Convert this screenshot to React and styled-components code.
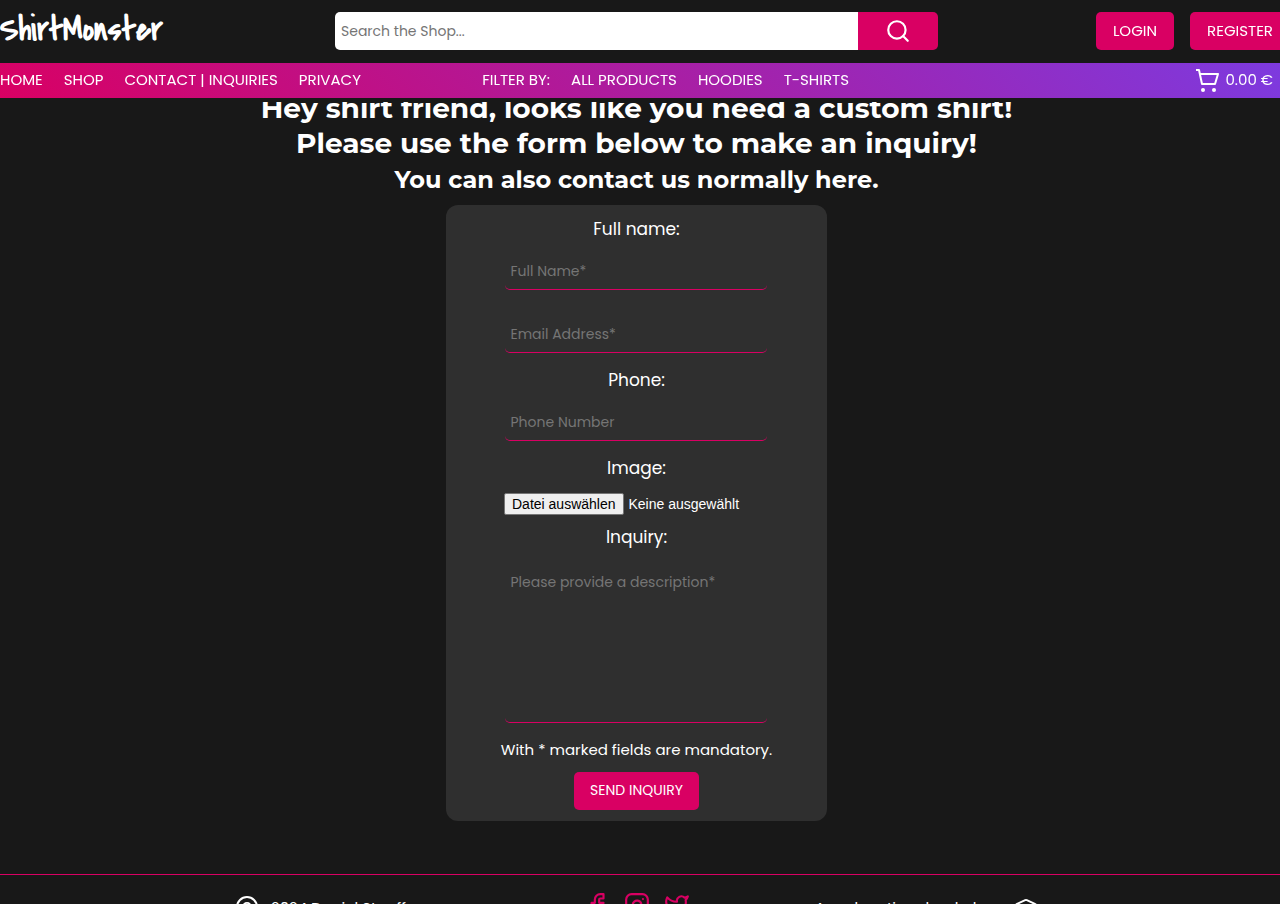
import React from "react";
import styled, { createGlobalStyle } from "styled-components";
import { Search, ShoppingCart, Facebook, Instagram, Twitter, Copyright, GraduationCap } from "lucide-react";

const pink = "#d90063";
const ink = "#181818";

const GlobalStyle = createGlobalStyle`
  *, *::before, *::after { box-sizing: border-box; }
  body {
    margin: 0;
    background: ${ink};
    color: #fff;
    font-family: Poppins, Inter, sans-serif;
    font-size: 15px;
    overflow-x: hidden;
  }
  a { color: inherit; text-decoration: none; }
`;

const Header = styled.header`
  position: fixed;
  top: 0;
  left: 0;
  right: 0;
  z-index: 2;
  background: ${ink};
  padding-bottom: 4px;
`;

const TopBar = styled.div`
  display: grid;
  grid-template-columns: 1fr minmax(300px, 603px) 1fr;
  align-items: center;
  height: 63px;
  padding: 0 7px 1px 0;
`;

const LogoLink = styled.a`
  display: block;
  height: 56px;
  align-self: start;
`;

const LogoText = styled.text`
  font: 700 34px "Just Another Hand", "Covered By Your Grace", "Reenie Beanie", Caveat, "Liberation Sans", cursive;
  fill: #fff;
`;

const SearchForm = styled.form`
  display: flex;
  height: 38px;
  border-radius: 5px;
  overflow: hidden;
`;

const SearchInput = styled.input`
  flex: 1;
  min-width: 0;
  border: 0;
  padding: 0 6px;
  background: #fff;
  font: inherit;
  font-size: 14px;
  &::placeholder { color: #757575; }
`;

const SearchButton = styled.button`
  display: flex;
  align-items: center;
  justify-content: center;
  width: 80px;
  border: 0;
  background: ${pink};
  color: #fff;
`;

const Account = styled.div`
  display: flex;
  justify-content: flex-end;
  gap: 16px;
  margin-right: -17px;
`;

const Button = styled.button`
  height: 38px;
  padding: 0 16px 2px;
  border: 0;
  border-radius: 5px;
  background: ${pink};
  color: #fff;
  font: inherit;
  font-size: 14px;
  white-space: nowrap;
`;

const AccountButton = styled(Button)`
  padding: 0 17px 1px;
  font-size: 15px;
`;

const NavBar = styled.nav`
  display: grid;
  grid-template-columns: 25fr 25fr 16fr;
  align-items: center;
  height: 35px;
  padding: 0 7px 2px 0;
  background: linear-gradient(45deg, ${pink}, #7d3adf);
  white-space: nowrap;
`;

const NavGroup = styled.div`
  display: flex;
  gap: 21px;
`;

const Cart = styled.a`
  display: flex;
  align-items: center;
  justify-content: flex-end;
  gap: 6px;
`;

const Main = styled.main`
  display: flex;
  flex-direction: column;
  align-items: center;
  padding: 91px 7px 53px 0;
`;

const Title = styled.h1`
  margin: 0;
  font: 700 28px/35px Montserrat, Inter, sans-serif;
  text-align: center;
`;

const Subtitle = styled.h2`
  margin: 4px 0 10px;
  font: 700 24px/30px Montserrat, Inter, sans-serif;
  text-align: center;
`;

const InquiryForm = styled.form`
  display: flex;
  flex-direction: column;
  align-items: center;
  width: 30%;
  min-width: 340px;
  padding: 12px 0 11px;
  border-radius: 12px;
  background: #2f2f2f;
`;

const Label = styled.label`
  font-size: 17px;
  line-height: 25px;
`;

const Field = styled.input`
  width: 262px;
  height: 37px;
  margin: 11px 0 15px;
  padding: 0 5px;
  border: 0;
  border-bottom: 1px solid ${pink};
  border-radius: 5px;
  background: transparent;
  color: #fff;
  font: inherit;
  font-size: 14px;
  &::placeholder { color: #757575; }
`;

const Message = styled(Field)`
  display: block;
  height: 161px;
  margin: 12px 0 14px;
  padding: 10px 5px;
  resize: none;
  line-height: 21px;
`;

const FileRow = styled.div`
  display: flex;
  align-items: center;
  gap: 5px;
  width: 265px;
  margin: 12px 0 10px;
  font: 14px/16px "Liberation Sans", sans-serif;
`;

const FileButton = styled.button`
  height: 22px;
  padding: 1px 7px;
  border: 1px solid #767676;
  border-radius: 2px;
  background: #efefef;
  color: #000;
  font: inherit;
  white-space: nowrap;
`;

const Note = styled.p`
  margin: 0 0 9px;
  line-height: 26px;
`;

const Footer = styled.footer`
  padding: 17px 7px 20px 0;
  border-top: 1px solid ${pink};
`;

const FooterRow = styled.div`
  display: grid;
  grid-template-columns: 1fr auto 1fr;
  align-items: center;
  max-width: 803px;
  margin: 0 auto;
`;

const FooterCell = styled.div`
  display: flex;
  align-items: center;
  justify-content: ${(p) => p.$align || "flex-start"};
  gap: 12px;
`;

const Social = styled.div`
  display: flex;
  gap: 14px;
  padding-bottom: 4px;
  color: ${pink};
  a { display: flex; }
`;

function Logo() {
  return (
    <svg width="180" height="56" viewBox="0 0 180 56" role="img" aria-label="ShirtMonster">
      <LogoText x="0" y="40">ShirtMonster</LogoText>
    </svg>
  );
}

export default function App() {
  const stop = (e) => e.preventDefault();
  return (
    <>
      <GlobalStyle />
      <Header>
        <TopBar>
          <LogoLink href="#home"><Logo /></LogoLink>
          <SearchForm role="search" onSubmit={stop}>
            <SearchInput type="search" aria-label="Search the Shop" placeholder="Search the Shop..." />
            <SearchButton aria-label="Search"><Search size={26} strokeWidth={2} /></SearchButton>
          </SearchForm>
          <Account>
            <AccountButton type="button">LOGIN</AccountButton>
            <AccountButton type="button">REGISTER</AccountButton>
          </Account>
        </TopBar>
        <NavBar>
          <NavGroup>
            <a href="#home">HOME</a>
            <a href="#shop">SHOP</a>
            <a href="#contact">CONTACT | INQUIRIES</a>
            <a href="#privacy">PRIVACY</a>
          </NavGroup>
          <NavGroup>
            <span>FILTER BY:</span>
            <a href="#all">ALL PRODUCTS</a>
            <a href="#hoodies">HOODIES</a>
            <a href="#t-shirts">T-SHIRTS</a>
          </NavGroup>
          <Cart href="#cart">
            <svg width="24" height="26" viewBox="0 0 24 26" fill="none" stroke="currentColor" strokeWidth="2" aria-hidden="true">
              <path d="M1 3h3l3 14h13l3-10H5" strokeLinejoin="round" />
              <circle cx="8" cy="23" r="2" fill="currentColor" stroke="none" />
              <circle cx="19" cy="23" r="2" fill="currentColor" stroke="none" />
            </svg>
            0.00 €
          </Cart>
        </NavBar>
      </Header>
      <Main>
        <Title>
          Hey shirt friend, looks like you need a custom shirt!
          <br />
          Please use the form below to make an inquiry!
        </Title>
        <Subtitle>You can also contact us normally <a href="#contact">here.</a></Subtitle>
        <InquiryForm onSubmit={stop}>
          <Label htmlFor="name">Full name:</Label>
          <Field id="name" placeholder="Full Name*" />
          <Field type="email" aria-label="Email Address" placeholder="Email Address*" />
          <Label htmlFor="phone">Phone:</Label>
          <Field id="phone" type="tel" placeholder="Phone Number" />
          <Label htmlFor="image">Image:</Label>
          <FileRow>
            <FileButton id="image" type="button">Datei auswählen</FileButton>
            <span>Keine ausgewählt</span>
          </FileRow>
          <Label htmlFor="inquiry">Inquiry:</Label>
          <Message as="textarea" id="inquiry" placeholder="Please provide a description*" />
          <Note>With * marked fields are mandatory.</Note>
          <Button>SEND INQUIRY</Button>
        </InquiryForm>
      </Main>
      <Footer>
        <FooterRow>
          <FooterCell><Copyright size={24} />2024 Daniel Stauffer</FooterCell>
          <Social>
            <a href="#facebook" aria-label="Facebook"><Facebook size={26} /></a>
            <a href="#instagram" aria-label="Instagram"><Instagram size={26} /></a>
            <a href="#twitter" aria-label="Twitter"><Twitter size={26} /></a>
          </Social>
          <FooterCell $align="flex-end">An educational webshop<GraduationCap size={24} /></FooterCell>
        </FooterRow>
      </Footer>
    </>
  );
}
